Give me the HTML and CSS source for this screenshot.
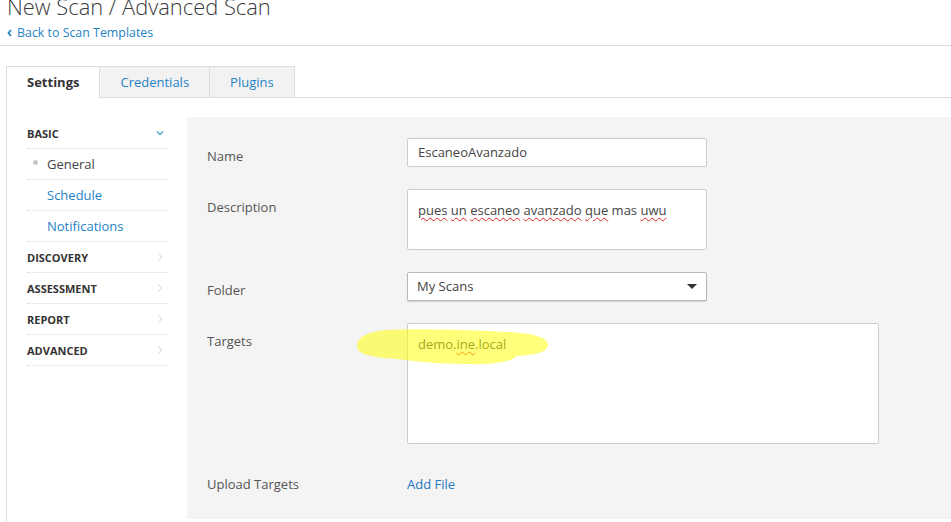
FILE: index.html
```html
<!DOCTYPE html>
<html lang="es">
<head>
  <meta charset="UTF-8">
  <title>New Scan / Advanced Scan</title>
  <link rel="stylesheet" href="styles.css">
</head>
<body>

  <header class="page-header">
    <h1>New Scan / Advanced Scan</h1>
    <a class="back-link" href="#">
      <svg width="5" height="8" viewBox="0 0 5 8"><path d="M4,1 L1.5,4 L4,7" fill="none" stroke="currentColor" stroke-width="1.8"/></svg>
      Back to Scan Templates
    </a>
  </header>

  <!-- Tabs -->
  <ul class="tabs">
    <li class="tab active">Settings</li>
    <li class="tab">Credentials</li>
    <li class="tab">Plugins</li>
  </ul>

  <div class="editor">
    <!-- Left menu -->
    <nav class="side-nav">
      <div class="nav-group">
        <span>BASIC</span>
        <svg class="chev" width="8" height="8" viewBox="0 0 8 8"><path d="M1,2.5 L4,5.5 L7,2.5" fill="none" stroke="#45a7c4" stroke-width="1.3"/></svg>
      </div>
      <a class="nav-item current" href="#">General</a>
      <a class="nav-item" href="#">Schedule</a>
      <a class="nav-item" href="#">Notifications</a>
      <div class="nav-group">
        <span>DISCOVERY</span>
        <svg class="chev" width="8" height="8" viewBox="0 0 8 8"><path d="M2.5,0.5 L5.5,4 L2.5,7.5" fill="none" stroke="#cfcfcf" stroke-width="1"/></svg>
      </div>
      <div class="nav-group">
        <span>ASSESSMENT</span>
        <svg class="chev" width="8" height="8" viewBox="0 0 8 8"><path d="M2.5,0.5 L5.5,4 L2.5,7.5" fill="none" stroke="#cfcfcf" stroke-width="1"/></svg>
      </div>
      <div class="nav-group">
        <span>REPORT</span>
        <svg class="chev" width="8" height="8" viewBox="0 0 8 8"><path d="M2.5,0.5 L5.5,4 L2.5,7.5" fill="none" stroke="#cfcfcf" stroke-width="1"/></svg>
      </div>
      <div class="nav-group">
        <span>ADVANCED</span>
        <svg class="chev" width="8" height="8" viewBox="0 0 8 8"><path d="M2.5,0.5 L5.5,4 L2.5,7.5" fill="none" stroke="#cfcfcf" stroke-width="1"/></svg>
      </div>
    </nav>

    <!-- Form -->
    <section class="form-panel">
      <div class="form-row">
        <label>Name</label>
        <div class="input">EscaneoAvanzado</div>
      </div>
      <div class="form-row">
        <label>Description</label>
        <div class="input textarea">
          <span class="typo">pues</span> <span class="typo">un</span> <span class="typo">escaneo</span> <span class="typo">avanzado</span> <span class="typo">que</span> mas <span class="typo">uwu</span>
        </div>
      </div>
      <div class="form-row">
        <label>Folder</label>
        <div class="input select">
          My Scans
          <span class="caret"></span>
        </div>
      </div>
      <div class="form-row">
        <label>Targets</label>
        <div class="targets-wrap">
          <div class="input targets">demo.<span class="typo">ine</span>.local</div>
          <!-- yellow marker scribble -->
          <svg class="marker" width="194" height="38" viewBox="0 0 194 38">
            <path d="M1,18 C1,10 10,4 30,2 C60,0 120,2 150,4 C175,5 192,9 192,17 C192,24 180,27 160,28 C158,33 140,37 110,36 C80,36 60,33 40,31 C10,29 1,25 1,18 Z"/>
          </svg>
        </div>
      </div>
      <div class="form-row last">
        <label>Upload Targets</label>
        <a class="add-file" href="#">Add File</a>
      </div>
    </section>
  </div>

</body>
</html>
```

FILE: styles.css
```css
body {
  font-family: 'Open Sans', 'Noto Sans', sans-serif;
  margin: 0;
  padding: 0;
  background-color: #fff;
  color: #333;
  font-size: 13px;
  overflow: hidden;
}

a {
  color: #2582c5;
  text-decoration: none;
}

.page-header {
  display: flow-root;
  box-sizing: border-box;
  height: 46px;
  padding: 0 7px;
  border-bottom: 1px solid #ddd;
}

.page-header h1 {
  margin: -5px 0 0 0;
  font-size: 21.9px;
  line-height: 24px;
  font-weight: 300;
  color: #3a3a3a;
}

.back-link {
  display: flex;
  align-items: center;
  gap: 5px;
  margin-top: 5px;
  font-size: 12.4px;
  line-height: 18px;
}

.tabs {
  display: flex;
  list-style: none;
  margin: 20px 0 0 6px;
  padding: 0;
  border-bottom: 1px solid #ddd;
}

.tab {
  height: 30px;
  line-height: 30px;
  padding: 0 20px;
  background: #f2f2f2;
  border: 1px solid #ddd;
  border-bottom: none;
  border-left: none;
  color: #2582c5;
  font-size: 13px;
}

.tab.active {
  background: #fff;
  color: #333;
  font-weight: 700;
  border-left: 1px solid #ddd;
  height: 31px;
  margin-bottom: -1px;
}

.editor {
  display: flex;
  gap: 20px;
  margin-left: 6px;
  padding: 19px 0 0 20px;
  border-left: 1px solid #ddd;
  height: 420px;
}

.side-nav {
  width: 140px;
  flex-shrink: 0;
  margin-top: 1px;
}

.nav-group,
.nav-item {
  display: flex;
  align-items: center;
  height: 30px;
  border-bottom: 1px dotted #d8d8d8;
}

.nav-group {
  justify-content: space-between;
  padding-right: 3px;
  font-size: 11px;
  font-weight: 700;
  color: #333;
}

.nav-item {
  padding-left: 6px;
  font-size: 13px;
}

.nav-item::before {
  content: "";
  width: 5px;
  height: 5px;
  border-radius: 50%;
  margin-right: 9px;
  margin-top: -3px;
  background: #c8c8c8;
  visibility: hidden;
}

.nav-item.current {
  color: #444;
}

.nav-item.current::before {
  visibility: visible;
}

.form-panel {
  flex: 1;
  background: #f4f4f4;
  padding: 21px 20px 26px 20px;
  height: 355px;
}

.form-row {
  display: flex;
  margin-bottom: 22px;
}

.form-row label {
  width: 200px;
  flex-shrink: 0;
  padding-top: 9px;
  line-height: 18px;
  color: #555;
}

.input {
  box-sizing: border-box;
  width: 300px;
  height: 29px;
  padding: 0 10px;
  line-height: 27px;
  background: #fff;
  border: 1px solid #ccc;
  border-radius: 2px;
  color: #444;
}

.textarea {
  height: 61px;
  padding-top: 11px;
  line-height: 18px;
}

.typo {
  text-decoration: underline wavy #e02020;
  text-decoration-thickness: 1px;
  text-underline-offset: 2px;
}

.select {
  display: flex;
  justify-content: space-between;
  align-items: center;
  padding: 0 9px;
  border-color: #b8b8b8;
  box-shadow: 0 1px 1px rgba(0, 0, 0, 0.15);
}

.caret {
  width: 0;
  height: 0;
  border-left: 5px solid transparent;
  border-right: 5px solid transparent;
  border-top: 5px solid #333;
}

.targets-wrap {
  position: relative;
}

.targets {
  width: 472px;
  height: 121px;
  padding-top: 11px;
  line-height: 18px;
}

.marker {
  position: absolute;
  left: -51px;
  top: 5px;
}

.marker path {
  fill: rgba(255, 255, 0, 0.52);
}

.add-file {
  padding-top: 9px;
  line-height: 18px;
  color: #1f78bd;
}

.form-row.last {
  margin-bottom: 0;
}
```
